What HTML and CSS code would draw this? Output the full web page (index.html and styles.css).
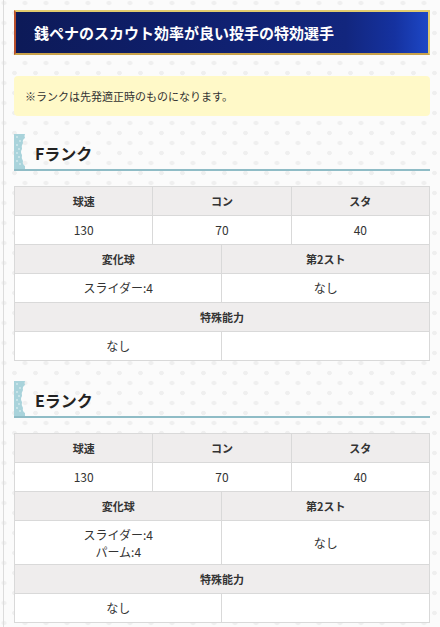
FILE: index.html
```html
<!DOCTYPE html>
<html lang="ja">
<head>
<meta charset="utf-8">
<title>銭ペナのスカウト効率が良い投手の特効選手</title>
<link rel="stylesheet" href="styles.css">
</head>
<body>
<div class="page">
  <h1 class="title-bar">銭ペナのスカウト効率が良い投手の特効選手</h1>
  <div class="note">※ランクは先発適正時のものになります。</div>

  <h2 class="rank-head">
    <svg class="rank-deco" width="12" height="35" viewBox="0 0 12 35"><path d="M0 0 H11 Q10 2 11 4 Q8 6 9 9 Q7 12 8 15 Q6 18 8 21 Q7 24 9 27 Q8 30 11 32 L11 35 H0 Z" fill="#a9d3db"/><path d="M2 3 H4 M5 7 H7 M2 11 H4 M4 15 H6 M2 19 H4 M4 23 H6 M2 27 H4 M5 30 H7" stroke="#e4f3f5" stroke-width="1"/></svg>
    <span>Fランク</span>
  </h2>
  <table class="stats">
    <colgroup><col><col><col><col><col><col></colgroup>
    <tr><th colspan="2">球速</th><th colspan="2">コン</th><th colspan="2">スタ</th></tr>
    <tr><td colspan="2">130</td><td colspan="2">70</td><td colspan="2">40</td></tr>
    <tr><th colspan="3">変化球</th><th colspan="3">第2スト</th></tr>
    <tr><td colspan="3">スライダー:4</td><td colspan="3">なし</td></tr>
    <tr><th colspan="6">特殊能力</th></tr>
    <tr><td colspan="3">なし</td><td colspan="3"></td></tr>
  </table>

  <h2 class="rank-head">
    <svg class="rank-deco" width="12" height="35" viewBox="0 0 12 35"><path d="M0 0 H11 Q10 2 11 4 Q8 6 9 9 Q7 12 8 15 Q6 18 8 21 Q7 24 9 27 Q8 30 11 32 L11 35 H0 Z" fill="#a9d3db"/><path d="M2 3 H4 M5 7 H7 M2 11 H4 M4 15 H6 M2 19 H4 M4 23 H6 M2 27 H4 M5 30 H7" stroke="#e4f3f5" stroke-width="1"/></svg>
    <span>Eランク</span>
  </h2>
  <table class="stats">
    <colgroup><col><col><col><col><col><col></colgroup>
    <tr><th colspan="2">球速</th><th colspan="2">コン</th><th colspan="2">スタ</th></tr>
    <tr><td colspan="2">130</td><td colspan="2">70</td><td colspan="2">40</td></tr>
    <tr><th colspan="3">変化球</th><th colspan="3">第2スト</th></tr>
    <tr><td colspan="3" class="multi">スライダー:4<br>パーム:4</td><td colspan="3">なし</td></tr>
    <tr><th colspan="6">特殊能力</th></tr>
    <tr><td colspan="3">なし</td><td colspan="3"></td></tr>
  </table>
</div>
</body>
</html>
```

FILE: styles.css
```css
html, body {
  margin: 0;
  padding: 0;
}
body {
  font-family: "Noto Sans CJK JP", "Noto Sans", "Liberation Sans", sans-serif;
  color: #333;
  background-color: #fbfbfb;
  background-image:
    radial-gradient(circle, #efefef 2px, transparent 2.6px),
    radial-gradient(circle, #efefef 2px, transparent 2.6px);
  background-size: 21px 20px, 21px 20px;
  background-position: 4px 3px, 14.5px 13px;
}
.page {
  margin-left: 3px;
  border-left: 1px solid #dcdcdc;
  padding: 10px 10px 20px 10px;
  min-height: 640px;
}
.title-bar {
  margin: 0 0 21px 0;
  height: 41px;
  box-sizing: content-box;
  border: 2px solid #e2cb6e;
  border-left-color: #b8502c;
  border-bottom-color: #c9a24a;
  background: linear-gradient(90deg, #0d1a58 0%, #0f1f6c 40%, #12267e 80%, #1532a0 92%, #1d47c6 100%);
  color: #fff;
  font-size: 15px;
  font-weight: bold;
  line-height: 41px;
  padding: 0 0 0 18px;
  white-space: nowrap;
}
.note {
  background: #fff9c8;
  border-radius: 4px;
  font-size: 11px;
  line-height: 40px;
  height: 40px;
  padding: 0 11px;
  margin-bottom: 19px;
}
.rank-head {
  display: flex;
  align-items: center;
  margin: 0 0 15px 0;
  height: 34px;
  border-bottom: 2px solid #8fbcc6;
  font-size: 16px;
  font-weight: bold;
  color: #222;
}
.rank-deco {
  flex: none;
  align-self: flex-end;
  margin-right: 9px;
}
.rank-head span {
  padding-top: 1px;
}
.stats {
  width: 100%;
  table-layout: fixed;
  border-collapse: collapse;
  margin-bottom: 21px;
  background: #fff;
}
.stats th,
.stats td {
  border: 1px solid #d9d9d9;
  text-align: center;
  padding: 5px 4px;
  line-height: 18px;
  font-size: 12px;
  height: 18px;
}
.stats th {
  background: #efeded;
  font-size: 11px;
  font-weight: bold;
  color: #333;
}
.stats td {
  color: #333;
}
.stats td.multi {
  line-height: 17px;
  padding: 5px 4px 4px;
}
```
